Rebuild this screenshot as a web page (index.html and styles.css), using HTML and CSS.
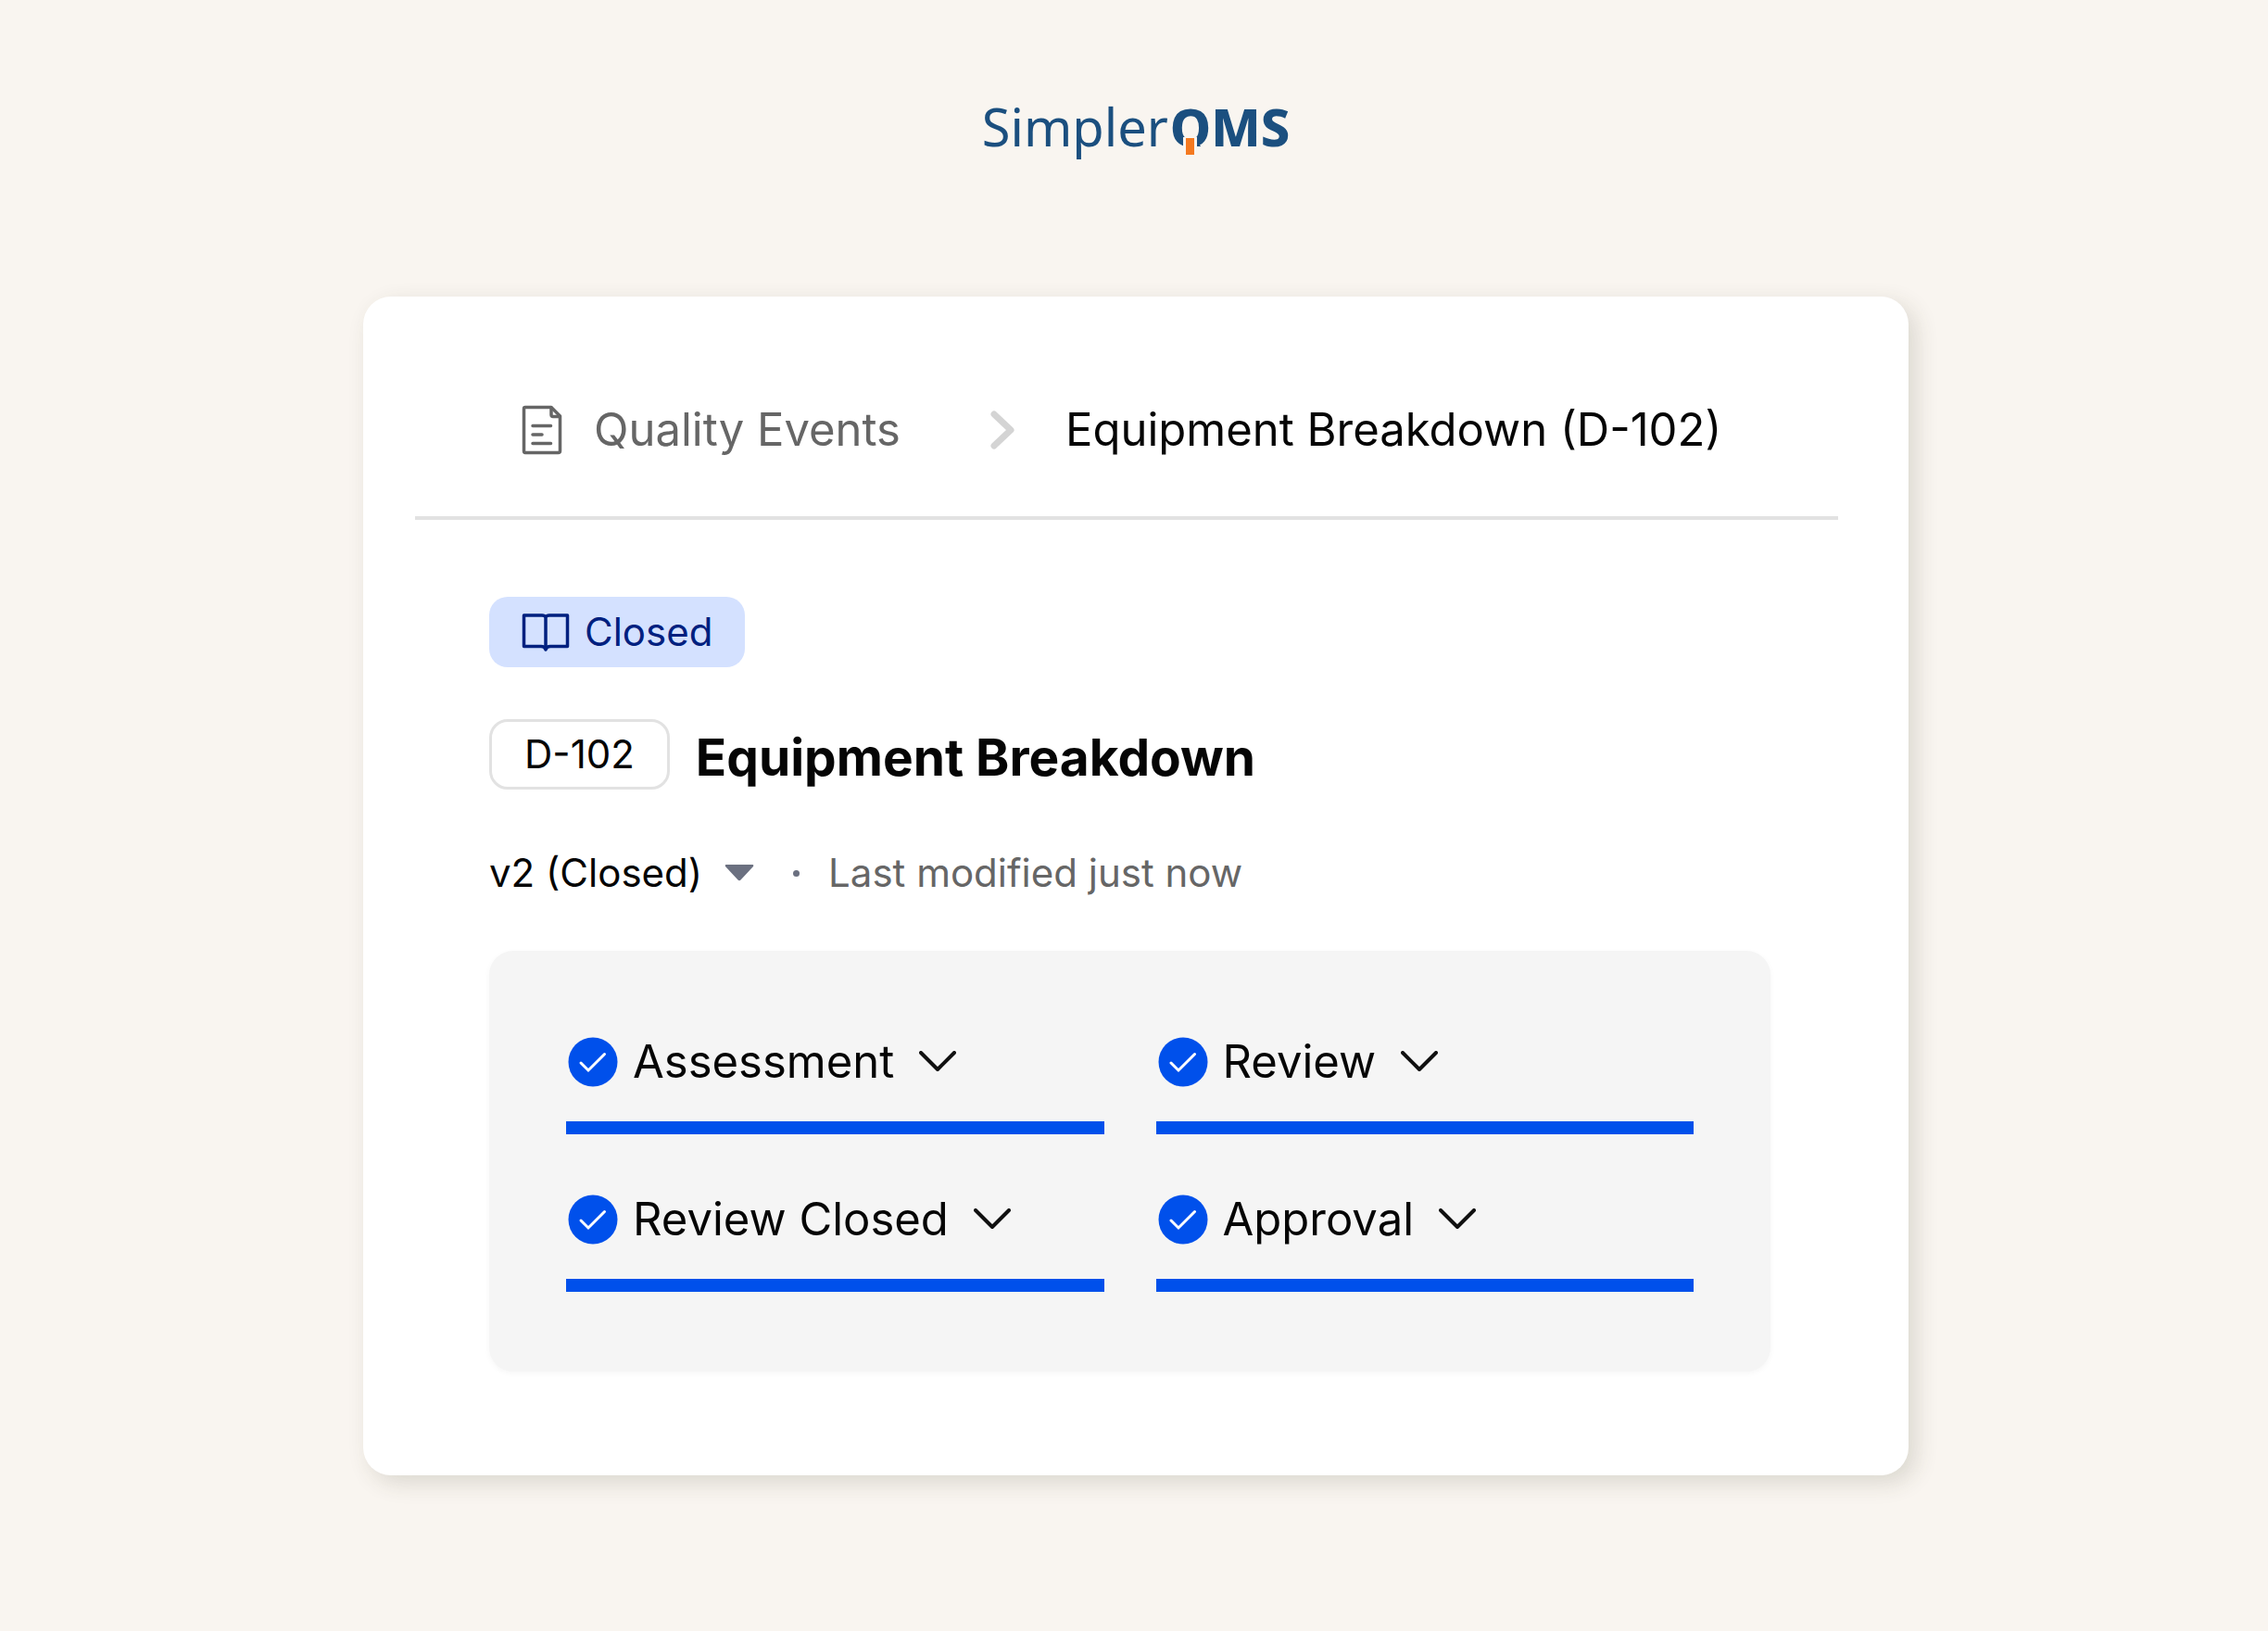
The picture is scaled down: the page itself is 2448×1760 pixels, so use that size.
FILE: index.html
```html
<!DOCTYPE html>
<html lang="en">
  <head>
    <meta charset="UTF-8" />
    <meta name="viewport" content="width=device-width, initial-scale=1.0" />
    <title>Equipment Breakdown (D-102) - SimplerQMS</title>
    <link rel="stylesheet" href="styles.css">
  </head>
  <body>
    <header>
      <div class="logo">
        <span class="logo-light">Simpler</span><span class="logo-bold"><span class="logo-q"><span class="q">Q</span></span>MS</span>
      </div>
    </header>

    <main class="card">
      <nav class="breadcrumb">
        <a href="#" class="crumb">
          <svg class="icon-doc" viewBox="0 0 44 54" fill="none" stroke="currentColor" stroke-width="3.500" stroke-linejoin="round" stroke-linecap="round">
            <path d="M4 2.500H32L41.500 12V49.500Q41.500 51.500 39.500 51.500H4Q2.500 51.500 2.500 49.500V4Q2.500 2.500 4 2.500Z" />
            <path d="M32 3V10.500Q32 12.500 34 12.500H41M12 22.500H31.500M12 32H22M12 41.500H31.500" />
          </svg>
          Quality Events
        </a>
        <svg class="icon-next" viewBox="0 0 28 44" fill="none" stroke="currentColor" stroke-width="7" stroke-linejoin="round" stroke-linecap="round">
          <path d="M5 5L23 22L5 39" />
        </svg>
        <span class="current">Equipment Breakdown (D-102)</span>
      </nav>

      <div class="content">
        <div class="status">
          <svg class="icon-book" viewBox="0 0 52 42" fill="none" stroke="currentColor" stroke-width="3.500" stroke-linejoin="round">
            <path d="M26 5Q25 3 22 3H2.500V36.500H21Q25 36.500 26 40Q27 36.500 31 36.500H49.500V3H30Q27 3 26 5V40" />
          </svg>
          Closed
        </div>

        <div class="title-row">
          <span class="tag">D-102</span>
          <h1>Equipment Breakdown</h1>
        </div>

        <div class="version-row">
          <button type="button" class="version">
            v2 (Closed)
            <svg class="icon-caret" viewBox="0 0 32 18" fill="currentColor">
              <path d="M1.500 0H30.500Q32 .5 31 2L17.500 16.500Q16 18 14.500 16.500L1 2Q0 .5 1.500 0Z" />
            </svg>
          </button>
          <span class="dot"></span>
          <span class="modified">Last modified just now</span>
        </div>

        <section class="steps">
          <button type="button" class="step">
            <svg class="icon-check" viewBox="0 0 54 54"><circle cx="27" cy="27" r="26.500" /><path d="M14 28L22 36L39.500 18.500" /></svg>
            Assessment
            <svg class="icon-down" viewBox="0 0 40 24"><path d="M2 2L20 20L38 2" /></svg>
          </button>
          <button type="button" class="step">
            <svg class="icon-check" viewBox="0 0 54 54"><circle cx="27" cy="27" r="26.500" /><path d="M14 28L22 36L39.500 18.500" /></svg>
            Review
            <svg class="icon-down" viewBox="0 0 40 24"><path d="M2 2L20 20L38 2" /></svg>
          </button>
          <button type="button" class="step">
            <svg class="icon-check" viewBox="0 0 54 54"><circle cx="27" cy="27" r="26.500" /><path d="M14 28L22 36L39.500 18.500" /></svg>
            Review Closed
            <svg class="icon-down" viewBox="0 0 40 24"><path d="M2 2L20 20L38 2" /></svg>
          </button>
          <button type="button" class="step">
            <svg class="icon-check" viewBox="0 0 54 54"><circle cx="27" cy="27" r="26.500" /><path d="M14 28L22 36L39.500 18.500" /></svg>
            Approval
            <svg class="icon-down" viewBox="0 0 40 24"><path d="M2 2L20 20L38 2" /></svg>
          </button>
        </section>
      </div>
    </main>
  </body>
</html>
```

FILE: styles.css
```css
* {
  box-sizing: border-box;
}
body {
  margin: 0;
  padding: 0 38px 168px 42px;
  background-color: #f9f5f0;
  color: #050505;
  font-family: Inter, sans-serif;
  font-size: 49px;
  line-height: 60px;
}
header {
  display: flex;
  justify-content: center;
  padding: 96px 0 144px;
}
svg {
  display: block;
  flex: none;
}
button {
  margin: 0;
  padding: 0;
  border: none;
  background: none;
  color: inherit;
  font: inherit;
  text-align: left;
  cursor: pointer;
}

/* logo */
.logo {
  display: flex;
  gap: 2px;
  color: #1b4f7f;
  font-family: "Noto Sans", sans-serif;
  font-size: 56px;
  line-height: 80px;
}
.logo-light {
  font-weight: 400;
}
.logo-bold {
  font-weight: 800;
}
.logo-q {
  position: relative;
  display: inline-block;
}
/* the tail of the Q is cut off, the orange bar takes its place */
.q {
  display: inline-block;
  clip-path: inset(0 0 18px 0);
}
.logo-q::after {
  content: "";
  position: absolute;
  left: 50%;
  bottom: 9px;
  width: 9px;
  height: 18px;
  margin-left: -8px;
  border: solid #f9f5f0;
  border-width: 1px 3px 0;
  background-color: #f47920;
}

.card {
  max-width: 1668px;
  margin: 0 auto;
  padding-top: 114px;
  border-radius: 30px;
  background-color: #fff;
  box-shadow: 8px 8px 24px rgba(60, 60, 40, 0.16);
}

/* breadcrumb */
.breadcrumb {
  display: flex;
  align-items: center;
  margin: 0 76px 0 56px;
  padding: 0 0 63px 115px;
  border-bottom: 4px solid #e2e2e2;
}
.crumb {
  display: flex;
  align-items: center;
  gap: 34px;
  color: #666;
  text-decoration: none;
}
.icon-doc {
  width: 44px;
  height: 54px;
}
.icon-next {
  width: 28px;
  height: 44px;
  margin: 0 54px 0 96px;
  color: #d4d4d4;
}

.content {
  padding: 83px 149px 112px 136px;
  font-size: 42px;
  line-height: 52px;
}
.status {
  display: flex;
  align-items: center;
  gap: 16px;
  width: fit-content;
  padding: 12px 35px;
  border-radius: 20px;
  background-color: #d4e1ff;
  color: #00207f;
}
.icon-book {
  width: 52px;
  height: 42px;
}
.title-row {
  display: flex;
  align-items: flex-end;
  gap: 28px;
  margin-top: 56px;
}
.tag {
  padding: 9px 35px;
  border: 3px solid #e2e2e2;
  border-radius: 20px;
}
h1 {
  margin: 0;
  font-size: 55px;
  font-weight: 700;
  line-height: 70px;
}
.version-row {
  display: flex;
  align-items: center;
  margin-top: 64px;
}
.version {
  display: flex;
  align-items: center;
  gap: 24px;
}
.icon-caret {
  width: 32px;
  height: 18px;
  color: #6b7080;
}
.dot {
  width: 7px;
  height: 7px;
  margin: 0 31px 0 42px;
  border-radius: 50%;
  background-color: #6b7080;
}
.modified {
  color: #666;
}

/* workflow steps */
.steps {
  display: grid;
  grid-template-columns: 1fr 1fr;
  gap: 62px 56px;
  margin-top: 58px;
  padding: 90px 83px 86px;
  border-radius: 26px;
  background-color: #f5f5f5;
  box-shadow: 0 2px 6px rgba(0, 0, 0, 0.04);
}
.step {
  display: flex;
  align-items: center;
  padding: 0 0 34px 2px;
  border-bottom: 14px solid #0050eb;
  font-size: 49px;
  line-height: 60px;
}
.icon-check {
  width: 54px;
  height: 54px;
  margin-right: 16px;
  fill: #0050eb;
}
.icon-check path {
  fill: none;
  stroke: #fff;
  stroke-width: 3;
  stroke-linecap: round;
}
.icon-down {
  width: 40px;
  height: 24px;
  margin-left: 27px;
  fill: none;
  stroke: #111;
  stroke-width: 4;
  stroke-linecap: round;
  stroke-linejoin: round;
}
```
